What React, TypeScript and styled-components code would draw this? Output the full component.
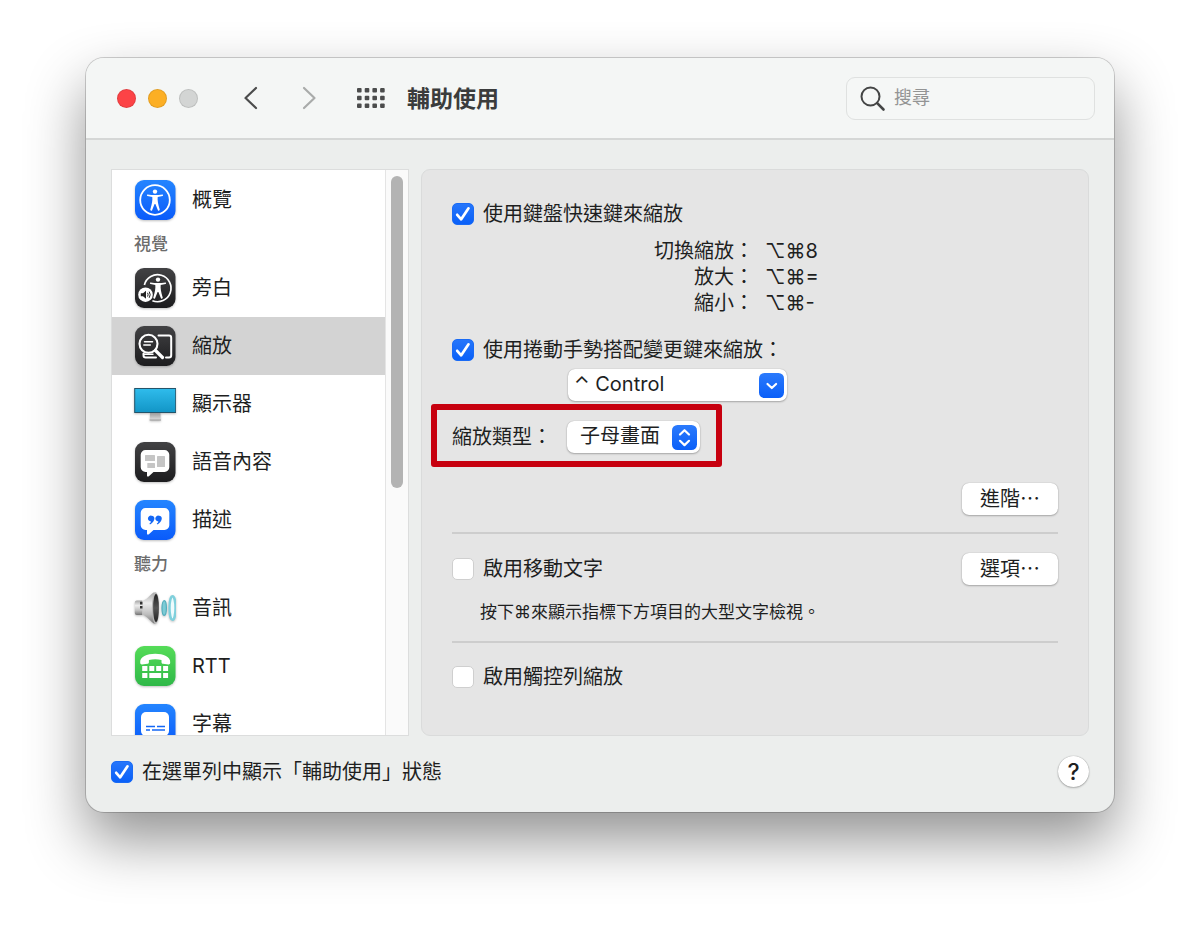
import React, { useState } from 'react';
import styled, { createGlobalStyle } from 'styled-components';

const LATIN_FIRST = `Inter, "Noto Sans CJK TC", "DejaVu Sans", sans-serif`;
const HAN_FIRST = `"Noto Sans CJK TC", Inter, sans-serif`;

const GlobalStyle = createGlobalStyle`
  *, *::before, *::after { box-sizing: border-box; }
  body {
    margin: 0;
    background: #fff;
    color: #1e1f1f;
    font: 20px/30px ${LATIN_FIRST};
  }
  button, input, select { font: inherit; color: inherit; }
`;

const Page = styled.main`
  padding: 58px 86px 114px;
  overflow: hidden;
`;

const Window = styled.section`
  display: flex;
  flex-direction: column;
  background: #eceeed;
  border-radius: 18px;
  box-shadow: 0 0 0 1px rgba(0, 0, 0, 0.18), 0 28px 58px rgba(0, 0, 0, 0.43);
`;

const TitleBar = styled.header`
  display: flex;
  align-items: center;
  height: 82px;
  padding: 0 19px 0 31px;
  background: #f4f6f5;
  border-bottom: 2px solid #d5d7d6;
  border-radius: 18px 18px 0 0;
`;

const Lights = styled.div`
  display: flex;
  gap: 12px;
`;

const Light = styled.button<{ $color: string }>`
  width: 19px;
  height: 19px;
  padding: 0;
  border: 1px solid rgba(0, 0, 0, 0.1);
  border-radius: 50%;
  background: ${(p) => p.$color};
`;

const ToolButton = styled.button`
  display: flex;
  padding: 0;
  border: 0;
  background: none;
`;

const Arrows = styled.div`
  display: flex;
  gap: 37px;
  margin: 0 38px 0 44px;
`;

const Title = styled.h1`
  flex: 1;
  margin: 0 0 3px 22px;
  font: 700 23px/32px ${HAN_FIRST};
  color: #3b3c3c;
`;

const SearchBox = styled.label`
  display: flex;
  align-items: center;
  gap: 8px;
  width: 249px;
  height: 43px;
  padding: 0 12px;
  border: 1px solid #dfe1e0;
  border-radius: 9px;
  background: #f5f7f6;
`;

const SearchInput = styled.input`
  min-width: 0;
  flex: 1;
  padding: 0;
  border: 0;
  outline: 0;
  background: none;
  font-size: 18px;
  &::placeholder { color: #939494; opacity: 1; }
`;

const Body = styled.div`
  display: flex;
  gap: 12px;
  padding: 29px 25px 0;
`;

const Sidebar = styled.nav`
  display: flex;
  width: 298px;
  flex: none;
  contain: size;
  overflow: hidden;
  border: 1px solid #dcdddd;
  background: #fff;
`;

const List = styled.ul`
  flex: 1;
  margin: 0;
  padding: 1px 0 0;
  list-style: none;
`;

const Section = styled.li`
  padding: 0 0 2px 22px;
  font: 500 17px/28px ${HAN_FIRST};
  color: #6c6c6c;
`;

const Item = styled.button<{ $selected: boolean }>`
  display: flex;
  align-items: center;
  gap: 16px;
  width: 100%;
  height: 58px;
  padding: 0 22px;
  border: 0;
  background: ${(p) => (p.$selected ? '#d3d3d3' : 'transparent')};
  text-align: left;
`;

const Track = styled.div`
  width: 23px;
  padding: 6px 5px;
  border-left: 1px solid #e4e4e4;
  background: #fafafa;
`;

const Thumb = styled.div`
  width: 12px;
  height: 312px;
  border-radius: 6px;
  background: #b3b3b3;
`;

const Panel = styled.form`
  flex: 1;
  min-width: 0;
  padding: 29px 30px 43px;
  border: 1px solid #dadbdb;
  border-radius: 9px;
  background: #e5e5e5;
`;

const CheckLabel = styled.label`
  display: flex;
  align-items: center;
  gap: 9px;
`;

const CheckCell = styled.span`
  display: grid;
  svg { grid-area: 1 / 1; pointer-events: none; }
`;

const CheckInput = styled.input`
  appearance: none;
  grid-area: 1 / 1;
  width: 22px;
  height: 22px;
  margin: 0;
  border: 1px solid #cfcfcf;
  border-radius: 5px;
  background: #fff;
  &:checked {
    border-color: #1a6bf5;
    background: linear-gradient(#2676fb, #0a60f8);
  }
  &:not(:checked) + svg { visibility: hidden; }
`;

const Shortcuts = styled.dl`
  display: grid;
  grid-template-columns: 302px auto;
  column-gap: 11px;
  margin: 9px 0 19px;
  line-height: 26px;
`;

const Action = styled.dt`
  text-align: right;
`;

const Keys = styled.dd`
  margin: 0;
`;

const ControlRow = styled.div`
  display: flex;
  padding: 4px 0 20px 116px;
`;

const SelectBox = styled.span<{ $width: number }>`
  display: grid;
  width: ${(p) => p.$width}px;
  height: 32px;
  align-items: center;
  border-radius: 7px;
  background: #fff;
  box-shadow: 0 0 1px rgba(0, 0, 0, 0.3), 0 1px 2px rgba(0, 0, 0, 0.25);
  svg {
    grid-area: 1 / 1;
    justify-self: end;
    margin-right: 3px;
    pointer-events: none;
  }
`;

const Select = styled.select<{ $inset: number }>`
  appearance: none;
  grid-area: 1 / 1;
  width: 100%;
  height: 32px;
  padding: 0 32px 2px ${(p) => p.$inset}px;
  border: 0;
  border-radius: 7px;
  background: none;
`;

const TypeRow = styled.div`
  position: relative;
  display: flex;
  align-items: center;
  width: 248px;
  &::after {
    content: '';
    position: absolute;
    inset: -17px -22px -14px -21px;
    border: 6px solid #c7000f;
    border-radius: 3px;
    pointer-events: none;
  }
`;

const TypeLabel = styled.label`
  flex: 1;
`;

const Actions = styled.div`
  display: flex;
  justify-content: flex-end;
  margin: 30px 0 17px;
`;

const PushButton = styled.button`
  width: 96px;
  height: 32px;
  padding: 0 0 2px;
  border: 0;
  border-radius: 7px;
  background: #fff;
  box-shadow: 0 0 1px rgba(0, 0, 0, 0.3), 0 1px 2px rgba(0, 0, 0, 0.25);
  font: 20px/30px ${HAN_FIRST};
`;

const Divider = styled.hr`
  height: 2px;
  margin: 0 0 19px;
  border: 0;
  background: #cdcdcd;
`;

const SplitRow = styled.div`
  display: flex;
  align-items: center;
  justify-content: space-between;
`;

const Hint = styled.p`
  margin: 15px 0 17px 28px;
  font-size: 17px;
  line-height: 24px;
`;

const Footer = styled.footer`
  display: flex;
  align-items: center;
  justify-content: space-between;
  padding: 20px 25px 25px;
`;

const HelpButton = styled.button`
  width: 31px;
  height: 31px;
  padding: 0;
  border: 0;
  border-radius: 50%;
  background: #fff;
  box-shadow: 0 0 1px rgba(0, 0, 0, 0.4), 0 1px 2px rgba(0, 0, 0, 0.25);
  font-size: 23px;
  font-weight: 500;
`;

const IconSvg = styled.svg`
  flex: none;
  filter: drop-shadow(0 1px 1px rgba(0, 0, 0, 0.25));
`;

type Tone = 'blue' | 'dark' | 'green';
const TONES: Record<Tone, [string, string]> = {
  blue: ['#2485ff', '#0a5bfa'],
  dark: ['#424244', '#1c1c1e'],
  green: ['#55dc58', '#2fb848'],
};

function Tile({ id, tone, children }: { id: string; tone: Tone; children: React.ReactNode }) {
  return (
    <IconSvg width="42" height="42" viewBox="0 0 42 42" aria-hidden="true">
      <defs>
        <linearGradient id={id} x1="0" y1="0" x2="0" y2="1">
          <stop offset="0" stopColor={TONES[tone][0]} />
          <stop offset="1" stopColor={TONES[tone][1]} />
        </linearGradient>
      </defs>
      <rect x="1" y="1" width="40.500" height="40" rx="9" fill={`url(#${id})`} />
      {children}
    </IconSvg>
  );
}

const Person = () => (
  <g fill="#fff">
    <circle cx="21" cy="12.600" r="2.200" />
    <path d="M13.500 15.400c-.8-.1-.8 1.500 0 1.700l4.800 1c.4 3.300-.4 7-2 12.500-.3 1.100 1.300 1.700 1.800.7L20.600 25h.8l2.500 6.300c.5 1 2.100.4 1.800-.7-1.600-5.500-2.400-9.200-2-12.500l4.800-1c.8-.2.8-1.800 0-1.700-5 .7-10 .7-15 0z" />
  </g>
);

const OverviewIcon = () => (
  <Tile id="overview" tone="blue">
    <circle cx="21" cy="21" r="14.800" fill="none" stroke="#fff" strokeWidth="1.800" />
    <Person />
  </Tile>
);

const VoiceOverIcon = () => (
  <Tile id="voiceover" tone="dark">
    <path d="M10.400 18a13.500 13.500 0 1 1 8 15.700" fill="none" stroke="#fff" strokeWidth="1.700" />
    <g transform="translate(3 0)"><Person /></g>
    <circle cx="11.500" cy="27.700" r="7.300" fill="#fff" />
    <path d="M6.800 26.200h2.200l3-2.500v8l-3-2.500H6.800z" fill="#222" />
    <path d="M13.600 25.800q1 1.900 0 3.800M15.200 24.600q2 3.100 0 6.200" fill="none" stroke="#222" strokeWidth="1" />
  </Tile>
);

const ZoomIcon = () => (
  <Tile id="zoom" tone="dark">
    <g fill="none" stroke="#fff" strokeLinecap="round" strokeLinejoin="round">
      <path d="M24.500 10.500H35a2.200 2.200 0 0 1 2.200 2.200v17.500a2.200 2.200 0 0 1-2.200 2.200h-3M9.500 28.500v1.700a2.200 2.200 0 0 0 2.200 2.200H22" strokeWidth="2" />
      <path d="M9.500 29.300h9.500" strokeWidth="1.400" />
      <circle cx="14.500" cy="18.800" r="9" strokeWidth="2.100" />
      <path d="M21.500 25.500l7 7" strokeWidth="3.200" />
      <path d="M10.500 16.800h8M9.800 20h6.500" strokeWidth="1.500" />
    </g>
  </Tile>
);

const DisplayIcon = () => (
  <IconSvg width="42" height="42" viewBox="0 0 42 42" aria-hidden="true">
    <defs>
      <linearGradient id="display" x1="0" y1="0" x2="0" y2="1">
        <stop offset="0" stopColor="#2fbcec" />
        <stop offset="1" stopColor="#1295c6" />
      </linearGradient>
      <linearGradient id="stand" x1="0" y1="0" x2="0" y2="1">
        <stop offset="0" stopColor="#9c9c9c" />
        <stop offset="1" stopColor="#dedede" />
      </linearGradient>
    </defs>
    <path d="M16 30h10.500v7H16z" fill="url(#stand)" />
    <path d="M15.600 37h11.400" stroke="#999" strokeWidth="1" />
    <rect x=".7" y="5.500" width="41" height="24" fill="url(#display)" stroke="#24546a" strokeWidth="1" />
  </IconSvg>
);

const Bubble = () => (
  <path
    d="M11.500 9h19a4.800 4.800 0 0 1 4.800 4.800v12.400a4.800 4.800 0 0 1-4.800 4.800H19.500l-4.600 4.200c-.9.800-1.900.4-1.900-.8V31h-1.500a4.800 4.800 0 0 1-4.800-4.800V13.800A4.800 4.800 0 0 1 11.500 9z"
    fill="#fff"
  />
);

const SpeechIcon = () => (
  <Tile id="speech" tone="dark">
    <Bubble />
    <g fill="#c5c5c5">
      <rect x="11" y="14" width="10" height="6" rx=".6" />
      <rect x="13.300" y="22" width="7.700" height="5" rx=".6" />
      <rect x="23" y="15" width="8" height="11" rx=".6" />
    </g>
  </Tile>
);

const DescriptionIcon = () => (
  <Tile id="description" tone="blue">
    <Bubble />
    <g fill="#1467f5">
      <path d="M17.500 16.700a2.900 2.900 0 1 0-.4 5.700c-.3 1-.9 1.600-1.700 2.100l.6.900c2.500-1.200 4.500-3.600 4.400-6.100a2.800 2.800 0 0 0-2.900-2.600z" />
      <path d="M24.900 16.700a2.900 2.900 0 1 0-.4 5.700c-.3 1-.9 1.600-1.700 2.100l.6.900c2.500-1.200 4.500-3.600 4.400-6.100a2.800 2.800 0 0 0-2.900-2.600z" />
    </g>
  </Tile>
);

const AudioIcon = () => (
  <IconSvg width="42" height="42" viewBox="0 0 42 42" aria-hidden="true">
    <defs>
      <linearGradient id="cone" x1="0" y1="0" x2="0" y2="1">
        <stop offset="0" stopColor="#a5a5a5" />
        <stop offset=".35" stopColor="#ededed" />
        <stop offset=".7" stopColor="#bdbdbd" />
        <stop offset="1" stopColor="#737373" />
      </linearGradient>
      <linearGradient id="mouth" x1="0" y1="0" x2="0" y2="1">
        <stop offset="0" stopColor="#222" />
        <stop offset=".5" stopColor="#555" />
        <stop offset="1" stopColor="#222" />
      </linearGradient>
    </defs>
    <path d="M.8 15.500q0-2 2-2h5.500v14.500H2.800q-2 0-2-2z" fill="url(#cone)" />
    <path d="M6 14.800h3.200v2.600H6zM6 19h3.200v2.600H6z" fill="#333" />
    <path d="M8.500 14C14 12 17 6.500 20.500 5v32C17 35 14 30 8.500 27.500z" fill="url(#cone)" />
    <ellipse cx="21.500" cy="21" rx="3.600" ry="15.800" fill="#b5b5b5" />
    <ellipse cx="22" cy="21" rx="2.900" ry="14" fill="url(#mouth)" />
    <ellipse cx="30.200" cy="21" rx="2.200" ry="7.300" fill="#7ccbd5" stroke="#51aebd" strokeWidth="1.200" />
    <ellipse cx="38.500" cy="21" rx="3" ry="11.800" fill="#eefbfd" stroke="#7fd0dc" strokeWidth="2.400" />
  </IconSvg>
);

const RttIcon = () => (
  <Tile id="rtt" tone="green">
    <g fill="#fff">
      <path d="M6.200 17.800C5.600 11.500 13 8.800 21.200 8.800s15.600 2.700 15 9c-.1 1.200-.8 1.700-1.800 1.600l-5.400-.6c-1.100-.1-1.500-.7-1.500-1.800v-1.900q-6.300-1.500-12.600 0V17c0 1.100-.4 1.700-1.500 1.800l-5.400.6c-1 .1-1.700-.4-1.800-1.600z" />
      <path d="M8.200 21h5.200v5H8.200zM15.300 21h5v5h-5zM22.200 21h5v5h-5zM29.100 21h5v5h-5zM8.200 28h5.200v5H8.200zM15.300 28h11.900v5H15.300zM29.100 28h5v5h-5z" />
    </g>
  </Tile>
);

const CaptionIcon = () => (
  <Tile id="caption" tone="blue">
    <rect x="7" y="9" width="28" height="24" rx="5" fill="#fff" />
    <path d="M12 23.500h9M23 23.500h8M12 27h4M18 27h13" stroke="#1467f5" strokeWidth="1.600" />
  </Tile>
);

const GROUPS = [
  { heading: '', items: [{ name: '概覽', Icon: OverviewIcon }] },
  {
    heading: '視覺',
    items: [
      { name: '旁白', Icon: VoiceOverIcon },
      { name: '縮放', Icon: ZoomIcon },
      { name: '顯示器', Icon: DisplayIcon },
      { name: '語音內容', Icon: SpeechIcon },
      { name: '描述', Icon: DescriptionIcon },
    ],
  },
  {
    heading: '聽力',
    items: [
      { name: '音訊', Icon: AudioIcon },
      { name: 'RTT', Icon: RttIcon },
      { name: '字幕', Icon: CaptionIcon },
    ],
  },
];

const SHORTCUTS = [
  ['切換縮放\uFF1A', '⌥⌘8'],
  ['放大\uFF1A', '⌥⌘='],
  ['縮小\uFF1A', '⌥⌘-'],
];

function Check({ label, checked = false }: { label: string; checked?: boolean }) {
  return (
    <CheckLabel>
      <CheckCell>
        <CheckInput type="checkbox" defaultChecked={checked} />
        <svg width="22" height="22" viewBox="0 0 22 22" aria-hidden="true">
          <path d="M5.200 11.800l4 4.500 7.300-11" fill="none" stroke="#fff" strokeWidth="2.700" strokeLinecap="round" strokeLinejoin="round" />
        </svg>
      </CheckCell>
      {label}
    </CheckLabel>
  );
}

function Stepper({ path }: { path: string }) {
  return (
    <svg width="25" height="25" viewBox="0 0 25 25" aria-hidden="true">
      <defs>
        <linearGradient id="stepper" x1="0" y1="0" x2="0" y2="1">
          <stop offset="0" stopColor="#2b7afc" />
          <stop offset="1" stopColor="#0a5ff8" />
        </linearGradient>
      </defs>
      <rect width="25" height="25" rx="5.500" fill="url(#stepper)" />
      <path d={path} fill="none" stroke="#fff" strokeWidth="2.200" strokeLinecap="round" strokeLinejoin="round" />
    </svg>
  );
}

export default function App() {
  const [selected, setSelected] = useState('縮放');
  return (
    <>
      <GlobalStyle />
      <Page>
        <Window>
          <TitleBar>
            <Lights>
              <Light $color="#fc4346" aria-label="關閉" />
              <Light $color="#fcaf24" aria-label="縮到最小" />
              <Light $color="#d3d5d4" aria-label="放大視窗" />
            </Lights>
            <Arrows>
              <ToolButton aria-label="上一頁">
                <svg width="20" height="24" viewBox="0 0 20 24">
                  <path d="M14 2L3.500 12 14 22" fill="none" stroke="#4b4c4c" strokeWidth="2.200" strokeLinecap="round" strokeLinejoin="round" />
                </svg>
              </ToolButton>
              <ToolButton aria-label="下一頁">
                <svg width="20" height="24" viewBox="0 0 20 24">
                  <path d="M5 2l10.500 10L5 22" fill="none" stroke="#a9abaa" strokeWidth="2.200" strokeLinecap="round" strokeLinejoin="round" />
                </svg>
              </ToolButton>
            </Arrows>
            <ToolButton aria-label="顯示全部">
              <svg width="28" height="20" viewBox="0 0 28 20" fill="#4b4c4c">
                {[0, 7.7, 15.4, 23.1].map((x) =>
                  [0, 7.7, 15.4].map((y) => <rect key={`${x}-${y}`} x={x} y={y} width="4.600" height="4.600" rx="1" />),
                )}
              </svg>
            </ToolButton>
            <Title>輔助使用</Title>
            <SearchBox>
              <svg width="27" height="27" viewBox="0 0 27 27" fill="none" stroke="#444545" aria-hidden="true">
                <circle cx="11.500" cy="11.500" r="9" strokeWidth="2" />
                <path d="M18.200 18.200l6.300 6.300" strokeWidth="2.600" strokeLinecap="round" />
              </svg>
              <SearchInput type="text" placeholder="搜尋" aria-label="搜尋" />
            </SearchBox>
          </TitleBar>

          <Body>
            <Sidebar aria-label="輔助使用">
              <List>
                {GROUPS.map(({ heading, items }) => (
                  <React.Fragment key={heading}>
                    {heading && <Section>{heading}</Section>}
                    {items.map(({ name, Icon }) => (
                      <li key={name}>
                        <Item type="button" $selected={name === selected} onClick={() => setSelected(name)}>
                          <Icon />
                          {name}
                        </Item>
                      </li>
                    ))}
                  </React.Fragment>
                ))}
              </List>
              <Track>
                <Thumb />
              </Track>
            </Sidebar>

            <Panel>
              <Check label="使用鍵盤快速鍵來縮放" checked />
              <Shortcuts>
                {SHORTCUTS.map(([action, keys]) => (
                  <React.Fragment key={action}>
                    <Action>{action}</Action>
                    <Keys>{keys}</Keys>
                  </React.Fragment>
                ))}
              </Shortcuts>
              <Check label={'使用捲動手勢搭配變更鍵來縮放\uFF1A'} checked />
              <ControlRow>
                <SelectBox $width={219}>
                  <Select $inset={6} aria-label="變更鍵">
                    <option>⌃ Control</option>
                  </Select>
                  <Stepper path="M8.500 11l4.300 4 4.300-4" />
                </SelectBox>
              </ControlRow>
              <TypeRow>
                <TypeLabel htmlFor="zoom-type">{'縮放類型\uFF1A'}</TypeLabel>
                <SelectBox $width={133}>
                  <Select $inset={13} id="zoom-type">
                    <option>子母畫面</option>
                  </Select>
                  <Stepper path="M8 9.500l4.500-4.300L17 9.500M8 15.800l4.500 4.300 4.500-4.300" />
                </SelectBox>
              </TypeRow>
              <Actions>
                <PushButton type="button">進階⋯</PushButton>
              </Actions>
              <Divider />
              <SplitRow>
                <Check label="啟用移動文字" />
                <PushButton type="button">選項⋯</PushButton>
              </SplitRow>
              <Hint>按下⌘來顯示指標下方項目的大型文字檢視。</Hint>
              <Divider />
              <Check label="啟用觸控列縮放" />
            </Panel>
          </Body>

          <Footer>
            <Check label="在選單列中顯示「輔助使用」狀態" checked />
            <HelpButton type="button" aria-label="輔助說明">?</HelpButton>
          </Footer>
        </Window>
      </Page>
    </>
  );
}
